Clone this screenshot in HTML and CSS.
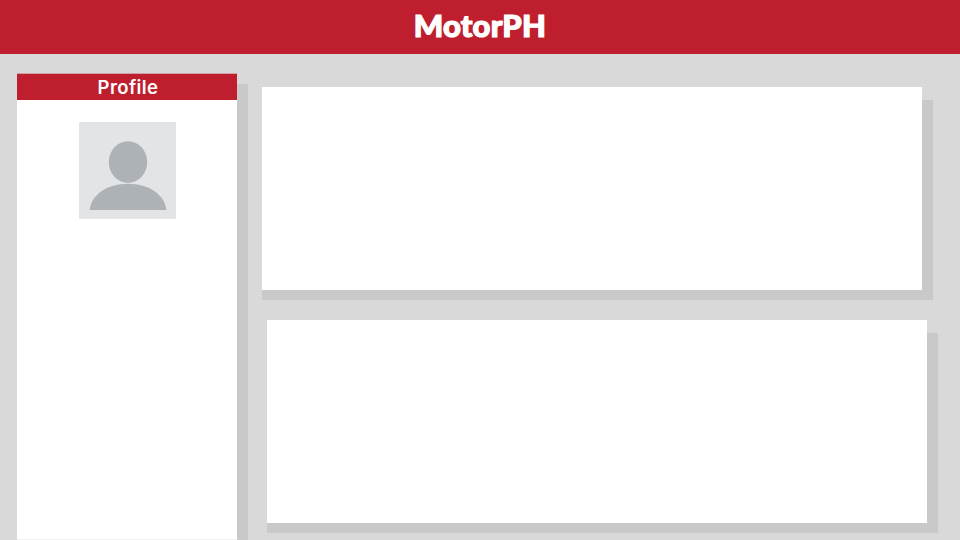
FILE: index.html
```html
<!DOCTYPE html>
<html lang="en">
<head>
<meta charset="utf-8">
<title>MotorPH</title>
<link rel="stylesheet" href="styles.css">
</head>
<body>
<header class="topbar"><h1 class="brand">MotorPH</h1></header>
<main class="layout">
  <aside class="profile-shadow">
    <section class="profile">
      <h2 class="profile-title">Profile</h2>
      <svg class="avatar" viewBox="0 0 97 97" aria-hidden="true">
        <rect width="97" height="97" fill="#e2e4e6"/>
        <ellipse cx="49" cy="40" rx="19.2" ry="20.8" fill="#adb2b6"/>
        <path d="M10.7 88C12 73 28 61.7 49 61.7S86 73 87.300 88Z" fill="#adb2b6"/>
      </svg>
    </section>
  </aside>
  <div class="content">
    <div class="card-shadow"><section class="card"></section></div>
    <div class="card-shadow lower"><section class="card"></section></div>
  </div>
</main>
</body>
</html>
```
FILE: styles.css
```css
* { box-sizing: border-box; }
body {
  margin: 0;
  height: 540px;
  overflow: hidden;
  background: #d9d9d9;
  font-family: Inter, sans-serif;
}
.topbar {
  height: 54px;
  display: flex;
  justify-content: center;
  background: #be1e2d;
  color: #fff;
}
.brand {
  margin: 0;
  font: 900 31px/50px Lato, sans-serif;
  letter-spacing: 0.2px;
  -webkit-text-stroke: 1.2px #fff;
}
.layout {
  display: flex;
  gap: 14px;
  padding: 19px 0 0 17px;
  height: 486px;
}
.profile-shadow {
  width: 231px;
  padding-right: 11px;
  background: linear-gradient(#c9c9c9, #c9c9c9) no-repeat 0 11px;
}
.profile {
  height: 100%;
  background: #fff;
  border-top: 1px solid #cda1a5;
  border-bottom: 1px solid #f0f0f0;
  display: flex;
  flex-direction: column;
  align-items: center;
}
.profile-title {
  width: 100%;
  height: 26px;
  margin: 0 0 22px;
  padding-left: 2px;
  background: #be1e2d;
  color: #fff;
  text-align: center;
  letter-spacing: 0.4px;
  font: 600 18.5px/26px Inter, sans-serif;
}
.avatar {
  width: 97px;
  height: 97px;
  margin-left: 1px;
}
.content {
  display: flex;
  flex-direction: column;
  gap: 20px;
  padding-top: 14px;
}
.card-shadow {
  width: 671px;
  height: 213px;
  padding: 0 11px 10px 0;
  background: linear-gradient(#c9c9c9, #c9c9c9) no-repeat 0 13px;
}
.card { height: 203px; background: #fff; }
.lower { margin-left: 5px; }
```
